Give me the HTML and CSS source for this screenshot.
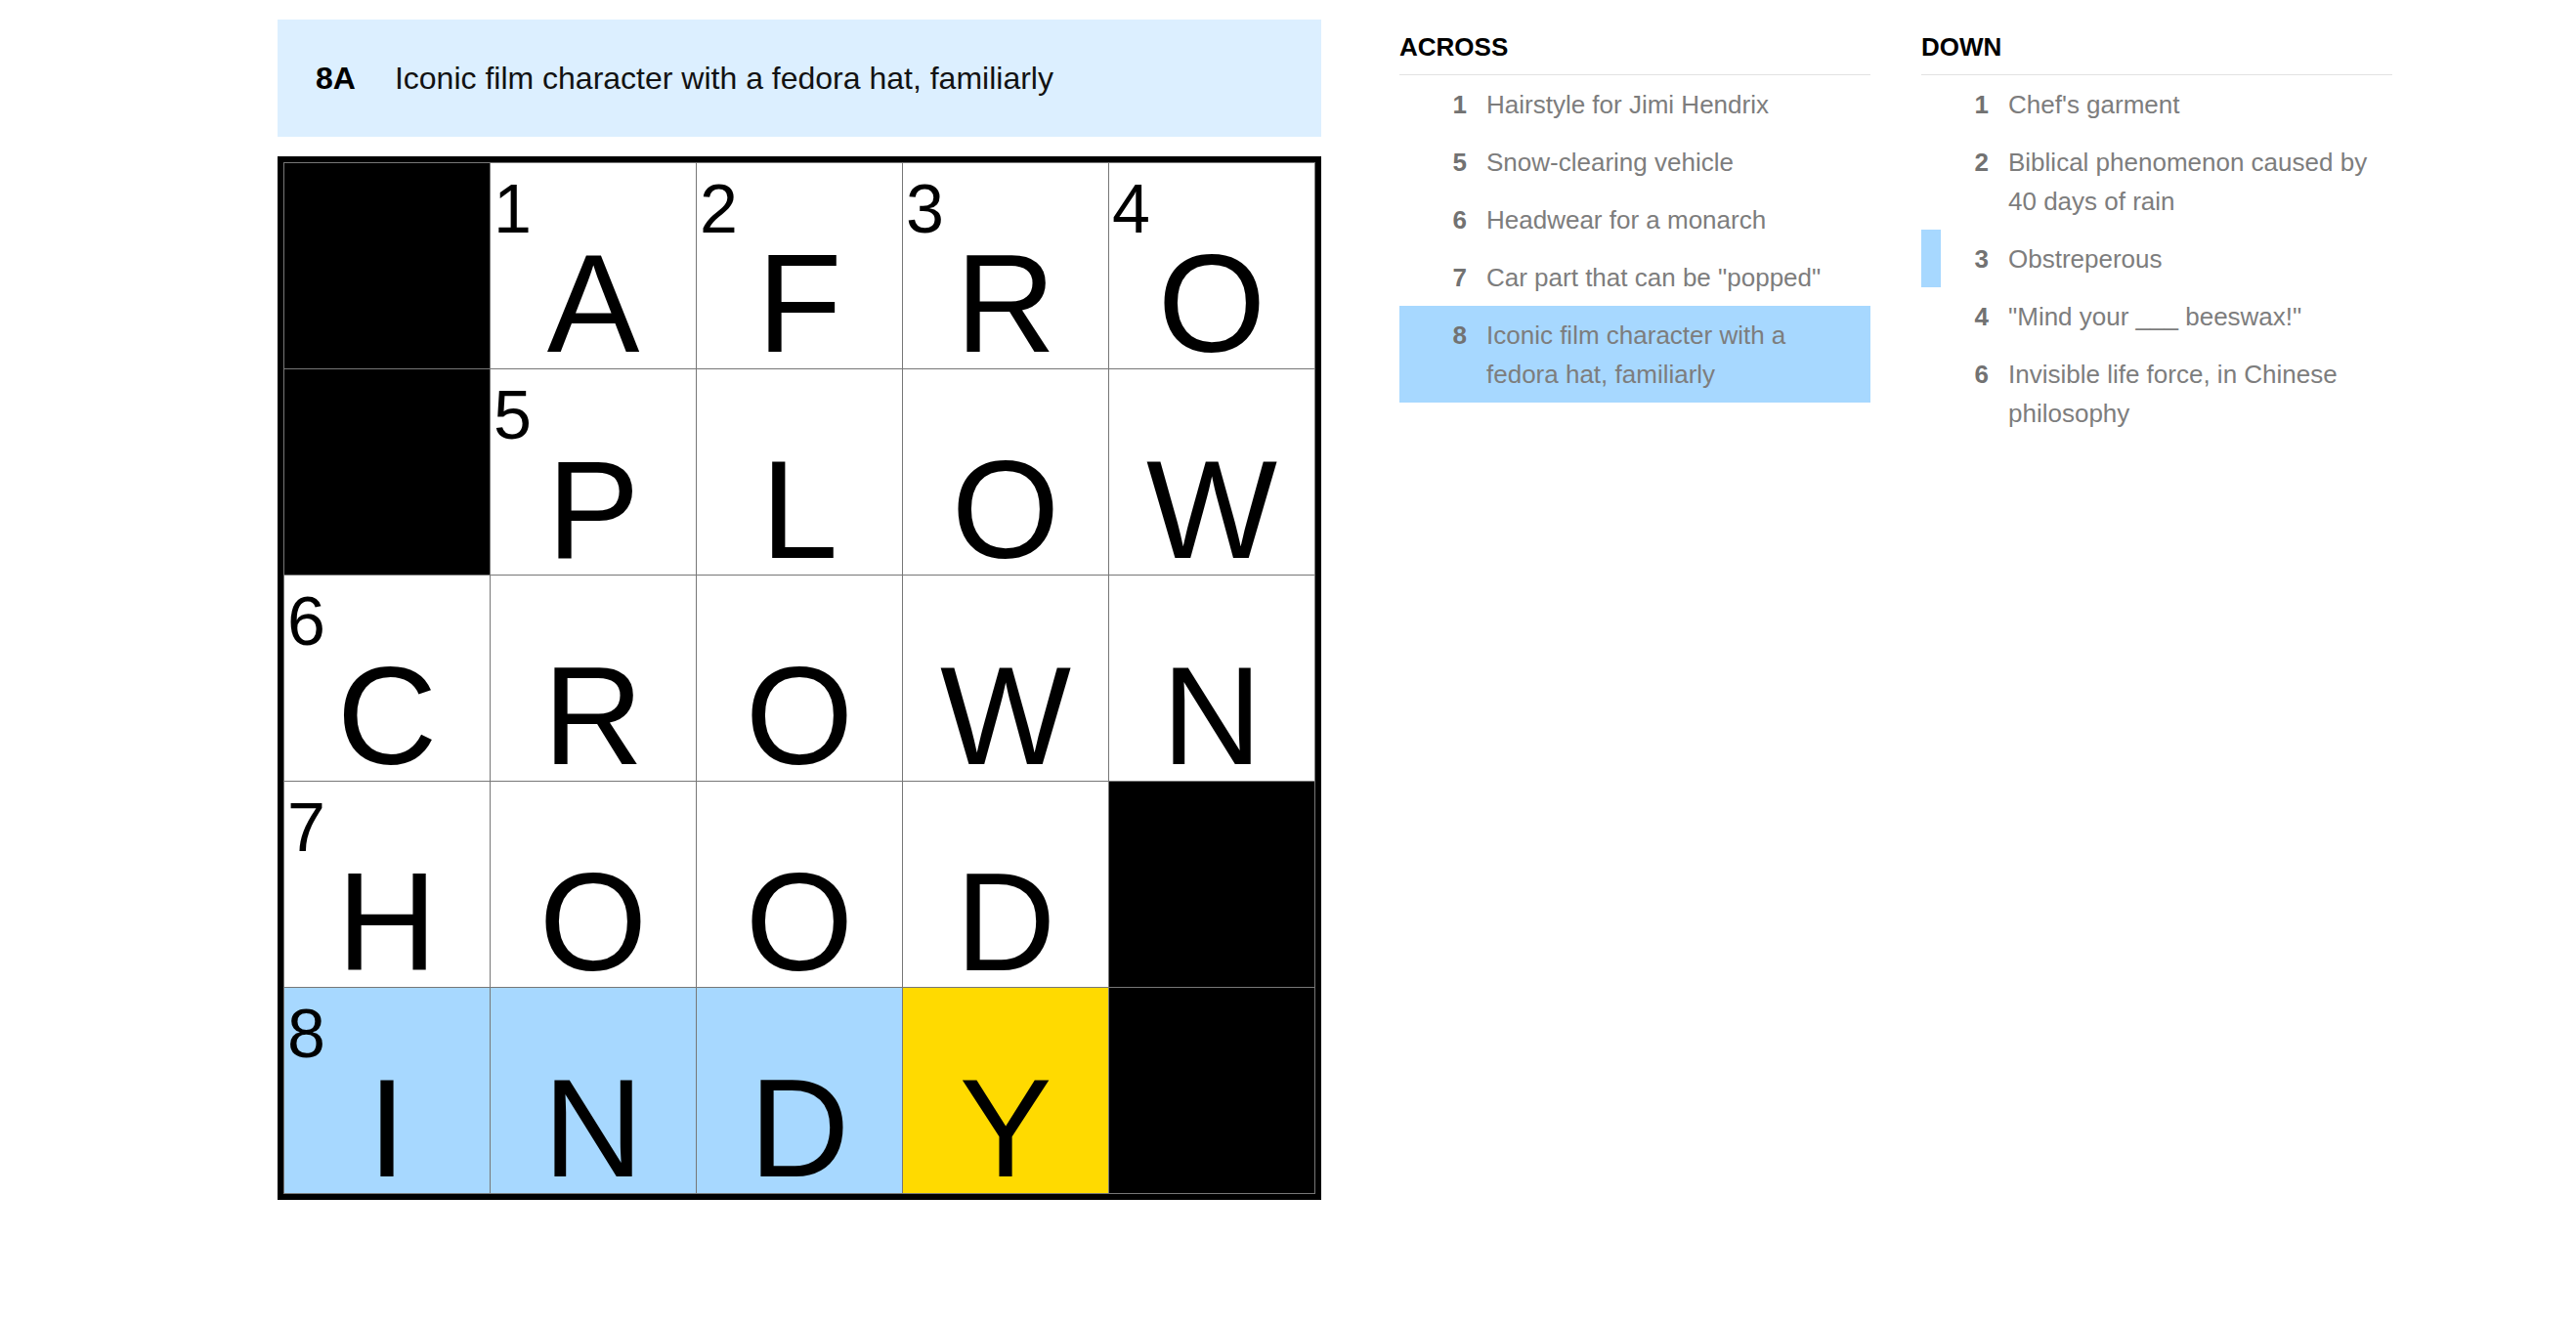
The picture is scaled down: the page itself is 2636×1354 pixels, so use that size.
FILE: index.html
```html
<!DOCTYPE html>
<html lang="en">
<head>
  <meta charset="UTF-8" />
  <meta name="viewport" content="width=device-width, initial-scale=1.0"/>
  <title>The Mini Crossword</title>
  <link rel="stylesheet" href="styles.css">
</head>
<body>
  <div class="app">

    <!-- Tablero -->
    <div class="puzzle">
      <div class="clue-bar">
        <span class="clue-bar-label">8A</span>
        <span class="clue-bar-text">Iconic film character with a fedora hat, familiarly</span>
      </div>

      <div class="board" id="board"></div>
    </div>

    <!-- Listas de pistas -->
    <div class="clue-lists">
      <div class="clue-list">
        <h3 class="clue-list-title">Across</h3>
        <ol>
          <li><span class="clue-num">1</span><span class="clue-text">Hairstyle for Jimi Hendrix</span></li>
          <li><span class="clue-num">5</span><span class="clue-text">Snow-clearing vehicle</span></li>
          <li><span class="clue-num">6</span><span class="clue-text">Headwear for a monarch</span></li>
          <li><span class="clue-num">7</span><span class="clue-text">Car part that can be "popped"</span></li>
          <li class="selected"><span class="clue-num">8</span><span class="clue-text">Iconic film character with a fedora hat, familiarly</span></li>
        </ol>
      </div>

      <div class="clue-list">
        <h3 class="clue-list-title">Down</h3>
        <ol>
          <li><span class="clue-num">1</span><span class="clue-text">Chef's garment</span></li>
          <li><span class="clue-num">2</span><span class="clue-text">Biblical phenomenon caused by 40 days of rain</span></li>
          <li class="related"><span class="clue-num">3</span><span class="clue-text">Obstreperous</span></li>
          <li><span class="clue-num">4</span><span class="clue-text">"Mind your ___ beeswax!"</span></li>
          <li><span class="clue-num">6</span><span class="clue-text">Invisible life force, in Chinese philosophy</span></li>
        </ol>
      </div>
    </div>

  </div>

  <script>
    // '#' = casilla negra
    const rows = ['#AFRO', '#PLOW', 'CROWN', 'HOOD#', 'INDY#'];
    const numbers = { '0,1': 1, '0,2': 2, '0,3': 3, '0,4': 4, '1,1': 5, '2,0': 6, '3,0': 7, '4,0': 8 };
    const board = document.getElementById('board');

    rows.forEach((row, r) => {
      [...row].forEach((ch, c) => {
        const cell = document.createElement('div');
        cell.classList.add('cell');

        if (ch === '#') {
          cell.classList.add('block');
        } else {
          if (r === 4) cell.classList.add(c === 3 ? 'active' : 'word');

          const num = numbers[`${r},${c}`];
          if (num) {
            const label = document.createElement('span');
            label.classList.add('cell-num');
            label.textContent = num;
            cell.appendChild(label);
          }

          const letter = document.createElement('span');
          letter.classList.add('cell-letter');
          letter.textContent = ch;
          cell.appendChild(letter);
        }

        board.appendChild(cell);
      });
    });
  </script>
</body>
</html>
```

FILE: styles.css
```css
* {
  box-sizing: border-box;
}

body {
  margin: 0;
  font-family: "Liberation Sans", Arial, sans-serif;
  background-color: #fff;
  color: #121212;
}

.app {
  display: flex;
  align-items: flex-start;
  padding: 20px 0 0 284px;
}

/* Barra de pista actual */
.puzzle {
  width: 1068px;
}

.clue-bar {
  height: 120px;
  background: #dcefff;
  display: flex;
  align-items: center;
  padding-left: 39px;
  font-size: 32px;
  line-height: 40px;
}

.clue-bar-label {
  font-weight: bold;
  color: #000;
  margin-right: 40px;
}

/* Tablero 5x5 */
.board {
  margin-top: 20px;
  border: 6px solid #000;
  background: #777;
  padding: 1px;
  display: grid;
  grid-template-columns: repeat(5, 210px);
  grid-auto-rows: 210px;
  gap: 1px;
}

.cell {
  position: relative;
  background: #fff;
  color: #000;
}

.cell.block {
  background: #000;
}

.cell.word {
  background: #a7d8ff;
}

.cell.active {
  background: #ffda00;
}

.cell-num {
  position: absolute;
  top: 12px;
  left: 3px;
  font-size: 70px;
  line-height: 70px;
}

.cell-letter {
  display: block;
  text-align: center;
  padding-top: 78px;
  font-size: 142px;
  line-height: 132px;
}

/* Listas */
.clue-lists {
  display: flex;
  gap: 52px;
  margin-left: 80px;
}

.clue-list {
  width: 482px;
}

.clue-list-title {
  margin: 13px 0 0;
  padding-bottom: 12px;
  border-bottom: 1px solid #e2e2e2;
  font-size: 26px;
  line-height: 31px;
  font-weight: bold;
  text-transform: uppercase;
  color: #000;
}

.clue-list ol {
  list-style: none;
  margin: 0;
  padding: 0;
}

.clue-list li {
  display: flex;
  padding: 9.5px 14px 9.5px 0;
  font-size: 26px;
  line-height: 40px;
  color: #7d7d7d;
}

.clue-list li.selected {
  background: #a7d8ff;
}

.clue-list li.related {
  box-shadow: inset 20px 0 #a7d8ff;
}

.clue-num {
  flex: none;
  width: 69px;
  margin-right: 20px;
  text-align: right;
  font-weight: bold;
  color: #727272;
}

.clue-text {
  flex: 1;
}
```
